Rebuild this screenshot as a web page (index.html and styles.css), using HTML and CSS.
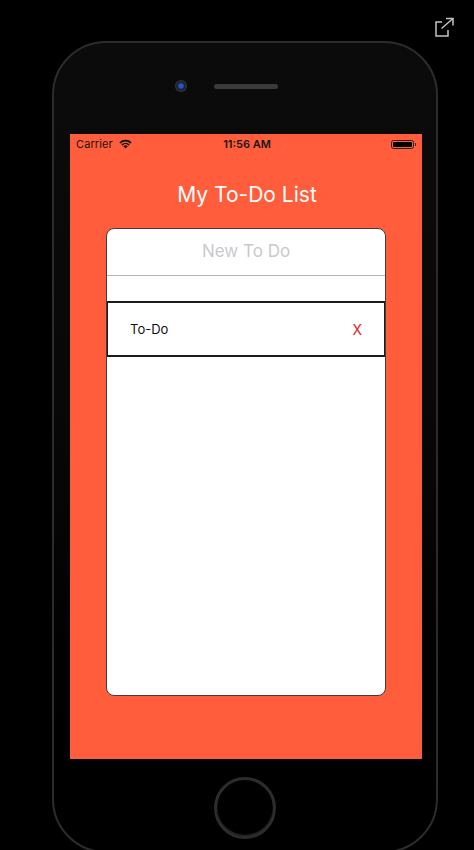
FILE: index.html
```html
<!DOCTYPE html>
<html lang="en">
<head>
<meta charset="utf-8">
<title>My To-Do List</title>
<link rel="stylesheet" href="styles.css">
</head>
<body>
<main class="stage">
  <a class="popout" href="#" aria-label="Open in new window">
    <svg width="24" height="24" viewBox="0 0 24 24" fill="none" stroke="#c4c4c4" stroke-width="1.5">
      <path d="M9 8H3V22H15V16"/>
      <path d="M8.5 14.5L20 4.5"/>
      <path d="M13 4.5H20V11.5"/>
    </svg>
  </a>
  <div class="phone">
    <div class="phone-top">
      <div class="sensors">
        <span class="camera"></span>
        <span class="speaker"></span>
      </div>
    </div>
    <div class="screen">
      <div class="statusbar">
        <div class="sb-left">
          <span class="carrier">Carrier</span>
          <svg class="wifi" width="13" height="10" viewBox="0 0 13 10">
            <path d="M6.5 9.6L0.3 3.2A9 9 0 0 1 12.7 3.2Z" fill="#111"/>
            <path d="M2.2 4.8A6.3 6.3 0 0 1 10.8 4.8" stroke="#ff5d3b" stroke-width="1.1" fill="none"/>
            <path d="M4.1 6.9A3.4 3.4 0 0 1 8.9 6.9" stroke="#ff5d3b" stroke-width="1.1" fill="none"/>
          </svg>
        </div>
        <span class="time">11:56 AM</span>
        <div class="sb-right">
          <span class="battery"><span class="battery-fill"></span></span>
          <span class="battery-nub"></span>
        </div>
      </div>
      <h1 class="title">My To-Do List</h1>
      <section class="card">
        <div class="new-todo">New To Do</div>
        <ul class="list">
          <li class="row">
            <span class="row-text">To-Do</span>
            <span class="row-delete">X</span>
          </li>
        </ul>
      </section>
    </div>
    <div class="phone-bottom">
      <span class="home"></span>
    </div>
  </div>
</main>
</body>
</html>
```

FILE: styles.css
```css
* { box-sizing: border-box; }

html, body {
  margin: 0;
  padding: 0;
  background: #000;
}

body {
  width: 474px;
  height: 850px;
  overflow: hidden;
  font-family: "Inter", "Roboto", "Liberation Sans", sans-serif;
}

.stage {
  position: relative;
  padding-top: 41px;
  padding-left: 52px;
  height: 850px;
}

.popout {
  position: absolute;
  left: 433px;
  top: 14px;
  width: 24px;
  height: 24px;
  display: block;
}

.popout svg { display: block; }

.phone {
  width: 386px;
  height: 812px;
  border: 2px solid #2c2c2c;
  border-radius: 54px;
  background: linear-gradient(#0b0b0b 0%, #080808 45%, #010101 75%, #000 100%);
  display: flex;
  flex-direction: column;
  align-items: center;
}

.phone-top {
  height: 91px;
  width: 100%;
  padding-top: 37px;
  display: flex;
  justify-content: center;
}

.sensors {
  display: flex;
  align-items: center;
  gap: 27px;
  height: 12px;
  margin-right: 37px;
}

.camera {
  width: 12px;
  height: 12px;
  border-radius: 50%;
  background: radial-gradient(circle at 50% 50%, #2a55c8 0 2px, #17306e 3px, #1b1b22 4px, #3a3a3e 6px);
}

.speaker {
  width: 64px;
  height: 5px;
  border-radius: 3px;
  background: #3a3a3a;
}

.screen {
  width: 352px;
  height: 625px;
  margin-left: 2px;
  background: #ff5d3b;
  display: flex;
  flex-direction: column;
  align-items: center;
}

.statusbar {
  width: 100%;
  height: 20px;
  padding: 0 6px;
  display: grid;
  grid-template-columns: 1fr auto 1fr;
  align-items: center;
  font-size: 11px;
  color: #161616;
}

.sb-left {
  display: flex;
  align-items: center;
  gap: 6px;
}

.carrier { letter-spacing: 0.1px; }

.wifi { display: block; }

.time {
  font-weight: 600;
  padding-left: 2px;
}

.sb-right {
  display: flex;
  align-items: center;
  justify-content: flex-end;
}

.battery {
  width: 23px;
  height: 9px;
  border: 1px solid #222;
  border-radius: 2.5px;
  padding: 1px;
  display: block;
}

.battery-fill {
  display: block;
  width: 100%;
  height: 100%;
  background: #000;
  border-radius: 1px;
}

.battery-nub {
  width: 1.5px;
  height: 3px;
  background: #333;
  display: block;
  margin-left: 1px;
}

.title {
  margin: 26px 0 18px;
  height: 30px;
  line-height: 30px;
  font-size: 21px;
  font-weight: 400;
  color: #fff;
  letter-spacing: 0;
  padding-left: 2px;
}

.card {
  width: 280px;
  height: 468px;
  background: #fff;
  border: 1px solid #4a3a36;
  border-radius: 8px;
  overflow: hidden;
}

.new-todo {
  height: 47px;
  border-bottom: 1px solid #b4b4b4;
  text-align: center;
  line-height: 44px;
  font-size: 17px;
  color: #c9c9ce;
}

.list {
  list-style: none;
  margin: 0;
  padding: 25px 0 0;
}

.row {
  height: 56px;
  margin: 0 -1px 0 -1px;
  border: 2px solid #1c1c1c;
  display: flex;
  align-items: center;
  justify-content: space-between;
  padding: 0 22px 0 22px;
  font-size: 13px;
}

.row-text { color: #111; }

.row-delete {
  color: #e3202a;
  font-size: 14px;
}

.phone-bottom {
  padding-top: 18px;
  display: flex;
  justify-content: center;
  width: 100%;
}

.home {
  width: 62px;
  height: 62px;
  border-radius: 50%;
  border: 3px solid #2c2c2c;
  box-shadow: inset 0 -1px 1px rgba(90,90,90,0.5);
}
```
